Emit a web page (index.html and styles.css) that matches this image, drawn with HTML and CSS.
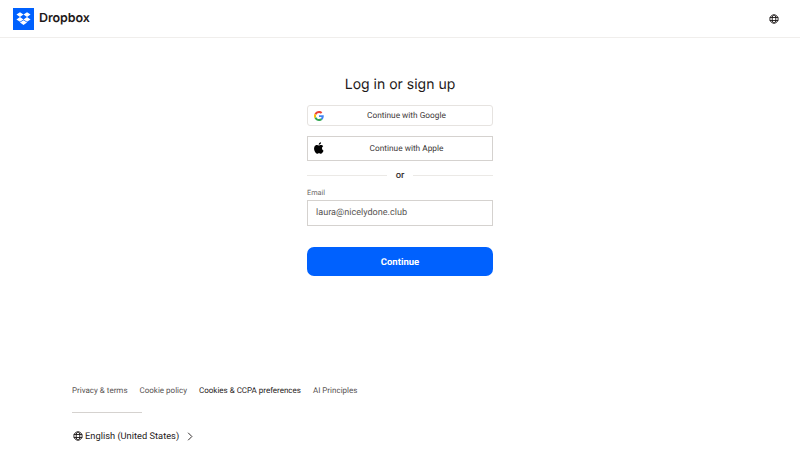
FILE: index.html
```html
<!DOCTYPE html>
<html lang="en">
<head>
<meta charset="utf-8">
<title>Dropbox</title>
<link rel="stylesheet" href="styles.css">
</head>
<body>
<div class="page">
  <header class="topbar">
    <div class="brand">
      <span class="logo">
        <svg viewBox="0 0 22 22" width="21" height="22" preserveAspectRatio="none"><rect width="22" height="22" fill="#0061fe"/><path fill="#fff" d="M7.300 4.200 3.600 6.600l3.700 2.400L11 6.600zM14.700 4.200 11 6.600 14.700 9l3.700-2.400zM3.600 11.400l3.700 2.400 3.700-2.400L7.300 9zM14.700 9 11 11.400l3.700 2.400 3.700-2.400zM7.300 14.600 11 17l3.700-2.400L11 12.200z"/></svg>
      </span>
      <span class="wordmark">Dropbox</span>
    </div>
    <svg class="globe" viewBox="0 0 12 12" width="10" height="10"><g fill="none" stroke="#1e1919" stroke-width="1.100"><circle cx="6" cy="6" r="5"/><ellipse cx="6" cy="6" rx="2.200" ry="5"/><path d="M1 4.200h10M1 7.800h10"/></g></svg>
  </header>

  <main class="auth">
    <h1 class="title">Log in or sign up</h1>
    <button class="oauth oauth-google">
      <svg class="oauth-icon" viewBox="0 0 48 48" width="10" height="10"><path fill="#ea4335" d="M24 9.500c3.500 0 6.700 1.200 9.200 3.600l6.900-6.900C35.900 2.400 30.500 0 24 0 14.600 0 6.500 5.400 2.600 13.200l8 6.200C12.500 13.600 17.800 9.500 24 9.500z"/><path fill="#4285f4" d="M46.900 24.500c0-1.600-.1-3.100-.4-4.500H24v9h12.900c-.6 3-2.200 5.500-4.700 7.200l7.700 6c4.500-4.200 7-10.300 7-17.700z"/><path fill="#fbbc05" d="M10.500 28.600c-.5-1.400-.8-3-.8-4.600s.3-3.200.8-4.600l-8-6.200C.9 16.500 0 20.100 0 24s.9 7.500 2.600 10.800z"/><path fill="#34a853" d="M24 48c6.500 0 11.900-2.100 15.900-5.800l-7.700-6c-2.200 1.400-4.900 2.300-8.200 2.300-6.200 0-11.500-4.200-13.400-9.800l-8 6.200C6.500 42.600 14.600 48 24 48z"/></svg>
      <span class="oauth-label">Continue with Google</span>
    </button>
    <button class="oauth oauth-apple">
      <svg class="oauth-icon" viewBox="0 0 24 24" width="14" height="14"><path fill="#000" d="M17.050 12.600c0-2.500 2.050-3.700 2.150-3.770-1.170-1.710-3-1.950-3.640-1.970-1.550-.16-3.030.91-3.810.91-.79 0-2-.89-3.290-.87-1.690.03-3.250.98-4.120 2.490-1.760 3.050-.45 7.560 1.260 10.030.84 1.210 1.840 2.570 3.150 2.520 1.260-.05 1.740-.82 3.270-.82 1.520 0 1.950.82 3.290.79 1.360-.02 2.220-1.230 3.050-2.450.96-1.400 1.360-2.770 1.380-2.840-.03-.01-2.660-1.020-2.690-4.030zM14.500 5.200c.7-.85 1.170-2.020 1.040-3.200-1 .04-2.220.67-2.940 1.510-.65.750-1.210 1.950-1.060 3.100 1.120.09 2.260-.57 2.960-1.410z"/></svg>
      <span class="oauth-label">Continue with Apple</span>
    </button>
    <div class="divider"><span class="rule"></span><span class="or">or</span><span class="rule"></span></div>
    <label class="field">
      <span class="field-label">Email</span>
      <input class="field-input" type="text" value="laura@nicelydone.club">
    </label>
    <button class="submit">Continue</button>
  </main>

  <footer class="footer">
    <nav class="links">
      <a class="link">Privacy &amp; terms</a>
      <a class="link">Cookie policy</a>
      <a class="link link-strong">Cookies &amp; CCPA preferences</a>
      <a class="link">AI Principles</a>
    </nav>
    <div class="footer-rule"></div>
    <div class="language">
      <svg viewBox="0 0 12 12" width="10" height="10"><g fill="none" stroke="#1e1919" stroke-width="1.100"><circle cx="6" cy="6" r="5"/><ellipse cx="6" cy="6" rx="2.200" ry="5"/><path d="M1 4.200h10M1 7.800h10"/></g></svg>
      <span>English (United States)</span>
      <svg class="chev" viewBox="0 0 8 12" width="6" height="9"><path d="M1.500 1 6.500 6l-5 5" fill="none" stroke="#1e1919" stroke-width="1.200"/></svg>
    </div>
  </footer>
</div>
</body>
</html>
```
FILE: styles.css
```css
* { box-sizing: border-box; }
html, body { margin: 0; padding: 0; background: #fff; }
body { font-family: Roboto, "Liberation Sans", sans-serif; color: #1e1919; text-rendering: geometricPrecision; }
button, input { text-rendering: geometricPrecision; }
.page { width: 800px; height: 470px; display: flex; flex-direction: column; overflow: hidden; }

.topbar { height: 38px; flex: none; display: flex; align-items: center; justify-content: space-between; padding: 0 21px 0 13px; border-bottom: 1px solid #f0eeec; }
.brand { display: flex; align-items: center; gap: 5px; }
.logo { display: block; width: 21px; height: 22px; }
.logo svg { display: block; }
.wordmark { font-family: Inter, sans-serif; font-size: 12.500px; font-weight: 600; letter-spacing: -0.1px; }
.globe { display: block; }

.auth { width: 186px; margin: 0 auto; flex: none; display: flex; flex-direction: column; }
.title { margin: 38px 0 0; height: 17px; line-height: 17px; font-family: Inter, sans-serif; font-size: 14px; font-weight: 400; text-align: center; }

.oauth { position: relative; width: 100%; display: flex; align-items: center; justify-content: center; padding: 0 0 0 13px; background: #fff; font: inherit; font-size: 8.300px; color: #3d3838; }
.oauth-google { height: 21px; margin-top: 12px; border: 1px solid #e6e3e0; border-radius: 3px; }
.oauth-apple { height: 25px; margin-top: 10px; border: 1px solid #d5d2cf; }
.oauth-icon { position: absolute; top: 50%; transform: translateY(-50%); left: 6px; }
.oauth-apple .oauth-icon { left: 4px; top: 11px; }
.oauth-label { display: block; }

.divider { display: flex; align-items: center; justify-content: space-between; margin-top: 7px; height: 14px; }
.rule { display: block; width: 80px; height: 1px; background: #ebe9e6; }
.or { font-size: 9.500px; font-weight: 500; color: #3d3838; }

.field { display: block; margin-top: 5px; }
.field-label { display: block; height: 13px; line-height: 11px; font-size: 7.300px; color: #6a6664; }
.field-input { display: block; width: 100%; height: 26px; padding: 0 8px; border: 1px solid #d5d2cf; border-radius: 0; font: inherit; font-size: 9.100px; color: #5a5655; outline: none; }

.submit { display: block; width: 100%; height: 29px; margin-top: 21px; border: none; border-radius: 7px; background: #0061fe; color: #fff; font: inherit; font-size: 9.500px; font-weight: 700; padding-top: 2px; }

.footer { margin-top: auto; padding: 0 0 27px 72px; }
.links { display: flex; gap: 12px; font-size: 8px; color: #575352; line-height: 12px; }
.link-strong { color: #1e1919; }
.footer-rule { width: 70px; height: 1px; margin-top: 15px; background: #d5d2cf; }
.language { display: flex; align-items: center; margin-top: 16px; height: 14px; padding-left: 1px; font-size: 9.300px; color: #1e1919; gap: 2px; }
.chev { margin-left: 6px; }
```
